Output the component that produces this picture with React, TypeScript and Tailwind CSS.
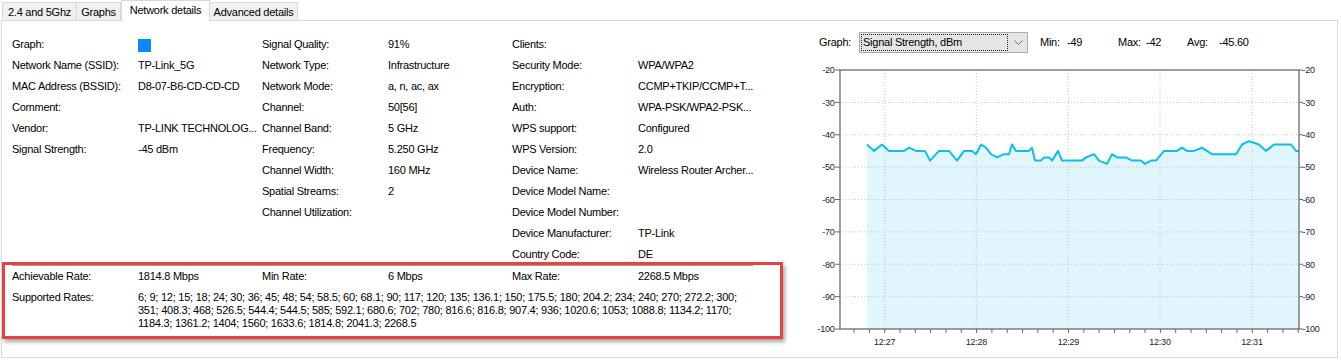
import React from "react";

const tabs = ["2.4 and 5Ghz", "Graphs", "Network details", "Advanced details"];
const tabWidths = ["w-[75px]", "w-[45px]", "w-[89px]", "w-[89px]"];

type Row = [string, React.ReactNode];

const col1: Row[] = [
  ["Graph:", <span className="inline-block w-[13px] h-[13px] bg-[#0f87ff] align-top mt-[5px]" />],
  ["Network Name (SSID):", "TP-Link_5G"],
  ["MAC Address (BSSID):", "D8-07-B6-CD-CD-CD"],
  ["Comment:", ""],
  ["Vendor:", "TP-LINK TECHNOLOG..."],
  ["Signal Strength:", "-45 dBm"],
];

const col2: Row[] = [
  ["Signal Quality:", "91%"],
  ["Network Type:", "Infrastructure"],
  ["Network Mode:", "a, n, ac, ax"],
  ["Channel:", "50[56]"],
  ["Channel Band:", "5 GHz"],
  ["Frequency:", "5.250 GHz"],
  ["Channel Width:", "160 MHz"],
  ["Spatial Streams:", "2"],
  ["Channel Utilization:", ""],
];

const col3: Row[] = [
  ["Clients:", ""],
  ["Security Mode:", "WPA/WPA2"],
  ["Encryption:", "CCMP+TKIP/CCMP+T..."],
  ["Auth:", "WPA-PSK/WPA2-PSK..."],
  ["WPS support:", "Configured"],
  ["WPS Version:", "2.0"],
  ["Device Name:", "Wireless Router Archer..."],
  ["Device Model Name:", ""],
  ["Device Model Number:", ""],
  ["Device Manufacturer:", "TP-Link"],
  ["Country Code:", "DE"],
];

const rates = [
  "6; 9; 12; 15; 18; 24; 30; 36; 45; 48; 54; 58.5; 60; 68.1; 90; 117; 120; 135; 136.1; 150; 175.5; 180; 204.2; 234; 240; 270; 272.2; 300;",
  "351; 408.3; 468; 526.5; 544.4; 544.5; 585; 592.1; 680.6; 702; 780; 816.6; 816.8; 907.4; 936; 1020.6; 1053; 1088.8; 1134.2; 1170;",
  "1184.3; 1361.2; 1404; 1560; 1633.6; 1814.8; 2041.3; 2268.5",
];

// signal samples: [x on screen, dBm]
const samples: [number, number][] = [
  [868, -43], [875, -45], [883, -43], [890, -45], [905, -45], [910, -44], [917, -45],
  [926, -45], [931, -48], [940, -45], [950, -45], [958, -48], [965, -45], [973, -45],
  [977, -46], [982, -43], [987, -44], [992, -46], [998, -47], [1005, -46], [1010, -46],
  [1013, -43], [1017, -45], [1030, -45], [1033, -44], [1036, -48], [1042, -48],
  [1045, -47], [1050, -47], [1053, -48], [1059, -45], [1063, -48], [1083, -48],
  [1087, -47], [1095, -46], [1100, -48], [1108, -49], [1113, -46], [1118, -47],
  [1127, -47], [1133, -48], [1142, -48], [1146, -49], [1152, -48], [1157, -48],
  [1165, -45], [1178, -45], [1183, -44], [1188, -45], [1195, -45], [1203, -44],
  [1213, -46], [1237, -46], [1243, -43], [1250, -42], [1260, -43], [1267, -45],
  [1275, -43], [1292, -43], [1297, -45], [1300, -45],
];

const TOP = 71;
const BOTTOM = 330;
const LEFT = 841;
const RIGHT = 1300;
const yOf = (v: number) => TOP + ((-20 - v) / 80) * (BOTTOM - TOP);

const minutes: [number, string][] = [
  [885.7, "12:27"],
  [977.3, "12:28"],
  [1069.3, "12:29"],
  [1161, "12:30"],
  [1253, "12:31"],
];

function Column({ rows }: { rows: Row[] }) {
  return (
    <div className="w-[250px]">
      {rows.map(([label, value], i) => (
        <div key={i} className="flex h-[21px] leading-[21px] whitespace-nowrap">
          <div className="w-[126px]">{label}</div>
          <div className="flex-1">{value}</div>
        </div>
      ))}
    </div>
  );
}

function Chart() {
  const line = samples.map(([x, v]) => `${x},${yOf(v).toFixed(1)}`).join(" ");
  const area = `${line} ${RIGHT},${BOTTOM} 868,${BOTTOM}`;
  const levels = [-20, -30, -40, -50, -60, -70, -80, -90, -100];
  const step = 91.9 / 6;
  const ticks: number[] = [];
  for (let x = 885.7 - 2 * step; x <= RIGHT + 0.5; x += step) ticks.push(x);

  return (
    <svg width="537" height="295" className="block">
      <g transform="translate(-801,-58)" fontFamily="Liberation Sans, Arial, sans-serif" fontSize="9">
        <polygon points={area} fill="#e1f6fc" />
        {levels.slice(1, -1).map((v) => (
          <line key={v} x1={LEFT} x2={RIGHT} y1={yOf(v)} y2={yOf(v)} stroke="#c4c4c4" strokeDasharray="1 2" />
        ))}
        {minutes.map(([x]) => (
          <line key={x} x1={x} x2={x} y1={TOP} y2={BOTTOM} stroke="#c4c4c4" strokeDasharray="1 2" />
        ))}
        <polyline points={line} fill="none" stroke="#0dbfe6" strokeWidth="2" strokeLinejoin="round" />
        <rect x={LEFT} y={TOP} width={RIGHT - LEFT} height={BOTTOM - TOP} fill="none" stroke="#6a6a6a" strokeWidth="1.3" />
        {levels.map((v) => (
          <g key={v}>
            <line x1={836} x2={LEFT} y1={yOf(v)} y2={yOf(v)} stroke="#6a6a6a" />
            <line x1={RIGHT} x2={1304} y1={yOf(v)} y2={yOf(v)} stroke="#6a6a6a" />
            <text x={835.5} y={yOf(v) + 3.3} textAnchor="end" fill="#1d1d1d">{v}</text>
            <text x={1303.5} y={yOf(v) + 3.3} fill="#1d1d2a">{v}</text>
          </g>
        ))}
        {ticks.map((x) => (
          <line key={x} x1={x} x2={x} y1={BOTTOM} y2={BOTTOM + 4} stroke="#6a6a6a" />
        ))}
        {minutes.map(([x, t]) => (
          <text key={t} x={x} y={346} textAnchor="middle" fill="#1d1d1d">{t}</text>
        ))}
      </g>
    </svg>
  );
}

export default function App() {
  return (
    <div className="relative w-[1341px] h-[360px] bg-white overflow-hidden text-[11px] tracking-[-0.25px] text-black font-['Liberation_Sans',Arial,sans-serif]">
      {/* tab strip */}
      <div className="flex items-end h-[20px] pl-[2px]">
        {tabs.map((t, i) =>
          i === 2 ? (
            <div
              key={t}
              className={`${tabWidths[i]} h-[21px] -mb-px relative z-10 bg-white border border-b-0 border-[#d9d9d9] text-center leading-[19px]`}
            >
              {t}
            </div>
          ) : (
            <div
              key={t}
              className={`${tabWidths[i]} h-[18px] bg-[#f0f0f0] border border-b-0 border-[#d9d9d9] -ml-px first:ml-0 text-center leading-[18px]`}
            >
              {t}
            </div>
          )
        )}
      </div>

      {/* tab panel */}
      <div className="ml-[1px] w-[1337px] h-[338px] border border-[#d9d9d9] bg-white flex">
        <div className="w-[799px] pl-[10px] pt-[13px]">
          <div className="flex">
            <Column rows={col1} />
            <Column rows={col2} />
            <Column rows={col3} />
          </div>
          <div className="w-[741px] border-t border-[#a0a0a0]" />
          <div className="flex h-[21px] leading-[21px] whitespace-nowrap">
            <div className="w-[126px]">Achievable Rate:</div>
            <div className="w-[124px]">1814.8 Mbps</div>
            <div className="w-[126px]">Min Rate:</div>
            <div className="w-[124px]">6 Mbps</div>
            <div className="w-[126px]">Max Rate:</div>
            <div>2268.5 Mbps</div>
          </div>
          <div className="flex mt-[4px] leading-[13px] whitespace-nowrap">
            <div className="w-[126px]">Supported Rates:</div>
            <div>
              {rates.map((r) => (
                <div key={r}>{r}</div>
              ))}
            </div>
          </div>
        </div>

        <div className="flex-1">
          <div className="flex items-center mt-[11px] h-[21px] pl-[19px] whitespace-nowrap">
            <div className="w-[40px]">Graph:</div>
            <div className="w-[169px] h-[21px] bg-[#e5e5e5] border border-[#adadad] flex items-center px-[1px]">
              <div className="w-[147px] h-[17px] border border-dotted border-[#222] leading-[15px] pl-[1px]">
                Signal Strength, dBm
              </div>
              <svg width="9" height="6" className="ml-[6px]" viewBox="0 0 9 6">
                <path d="M0.5 0.5 L4.5 4.5 L8.5 0.5" fill="none" stroke="#6b6b6b" strokeWidth="1" />
              </svg>
            </div>
            <div className="ml-[12px] w-[27px]">Min:</div>
            <div className="w-[51px]">-49</div>
            <div className="w-[28px]">Max:</div>
            <div className="w-[41px]">-42</div>
            <div className="w-[32px]">Avg:</div>
            <div>-45.60</div>
          </div>
          <div className="mt-[4px]">
            <Chart />
          </div>
        </div>
      </div>

      {/* annotation highlight */}
      <div className="absolute left-[2px] top-[262px] w-[781px] h-[77px] border-[3px] border-[#e8413f] shadow-[2px_3px_4px_rgba(0,0,0,0.35)] pointer-events-none" />
    </div>
  );
}
